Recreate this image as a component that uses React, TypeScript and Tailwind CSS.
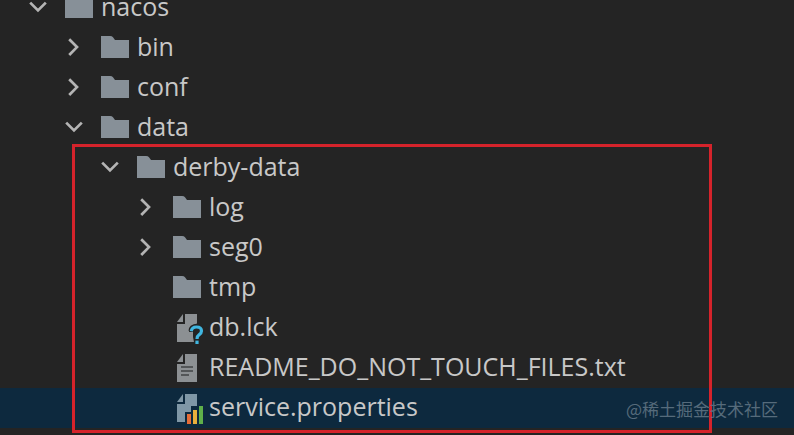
import clsx from "clsx";
import { useState } from "react";

type Kind = "folder" | "unknown" | "text" | "properties";

interface TreeNode {
  name: string;
  kind: Kind;
  children?: TreeNode[];
  closed?: boolean;
  selected?: boolean;
  outlined?: boolean;
}

const tree: TreeNode = {
  name: "nacos",
  kind: "folder",
  children: [
    { name: "bin", kind: "folder", children: [], closed: true },
    { name: "conf", kind: "folder", children: [], closed: true },
    {
      name: "data",
      kind: "folder",
      children: [
        {
          name: "derby-data",
          kind: "folder",
          outlined: true,
          children: [
            { name: "log", kind: "folder", children: [], closed: true },
            { name: "seg0", kind: "folder", children: [], closed: true },
            { name: "tmp", kind: "folder" },
            { name: "db.lck", kind: "unknown" },
            { name: "README_DO_NOT_TOUCH_FILES.txt", kind: "text" },
            { name: "service.properties", kind: "properties", selected: true },
          ],
        },
      ],
    },
  ],
};

const indents = ["pl-[29px]", "pl-[65px]", "pl-[101px]", "pl-[137px]"];

function Chevron({ open }: { open: boolean }) {
  return (
    <svg
      viewBox="0 0 18 40"
      className="h-10 w-[18px]"
      fill="none"
      stroke="#b4b4b4"
      strokeWidth="2.7"
      aria-hidden="true"
    >
      <path d={open ? "M1.2 14.6 L9 22.4 L16.8 14.6" : "M4.2 11.2 L12 19.1 L4.2 27"} />
    </svg>
  );
}

function NodeIcon({ kind, selected }: { kind: Kind; selected?: boolean }) {
  const gray = selected ? "#7f97a6" : "#8c9093";
  return (
    <svg
      viewBox="0 0 32 40"
      className="h-10 w-8 shrink-0"
      aria-hidden="true"
    >
      {kind === "folder" && (
        <path d="M0 8 H9 Q11 8 12 9.3 L14 12 H28 V30 H0 Z" fill="#879098" />
      )}
      {kind === "text" && (
        <>
          <path d="M12 6 H24 V34 H4 V16 H12 Z M10 6 V14 H4 Z" fill={gray} />
          <path
            d="M8 19 H20 M8 23 H20 M8 27 H16"
            stroke="#404345"
            strokeWidth="1.6"
          />
        </>
      )}
      {kind === "unknown" && (
        <>
          <path
            d="M12 6 H24 V15.5 Q17 17 16 24 H20 V29 L21 34 H4 V16 H12 Z M10 6 V14 H4 Z"
            fill={gray}
          />
          <path
            d="M18.5 23 Q18.8 19 23.5 19 Q28.5 19 28.5 23 Q28.5 25.2 26 26.8 Q24 28.2 24 31"
            fill="none"
            stroke="#252525"
            strokeWidth="6"
          />
          <path
            d="M18.3 23.2 Q18.8 19 23.5 19 Q28.5 19 28.5 23 Q28.5 25.2 26 26.8 Q24 28.2 24 31"
            fill="none"
            stroke="#40b6e0"
            strokeWidth="3.2"
          />
          <path d="M22.4 32.6 H25.6 V36 H22.4 Z" fill="#40b6e0" />
        </>
      )}
      {kind === "properties" && (
        <>
          <path
            d="M12 6 H24 V16 H24 V18 H18 V24 H12 V34 H4 V16 H12 Z M10 6 V14 H4 Z"
            fill={gray}
          />
          <path d="M14 26 H18 V36 H14 Z" fill="#e66d37" />
          <path d="M20 22 H24 V36 H20 Z" fill="#e9af3c" />
          <path d="M26 18 H30 V36 H26 Z" fill="#5fb04a" />
        </>
      )}
    </svg>
  );
}

function TreeItem({ node, depth }: { node: TreeNode; depth: number }) {
  const [open, setOpen] = useState(!node.closed);
  return (
    <li className={clsx(node.outlined && "relative")}>
      <button
        type="button"
        onClick={() => setOpen(!open)}
        className={clsx(
          "flex h-10 w-full items-center text-left",
          indents[depth],
          node.selected && "bg-[#0d293e]"
        )}
      >
        <span className="w-9 shrink-0">
          {node.children && <Chevron open={open} />}
        </span>
        <NodeIcon kind={node.kind} selected={node.selected} />
        <span className="ml-1 pb-1 whitespace-nowrap">{node.name}</span>
      </button>
      {open && node.children && node.children.length > 0 && (
        <ul>
          {node.children.map((child) => (
            <TreeItem key={child.name} node={child} depth={depth + 1} />
          ))}
        </ul>
      )}
      {node.outlined && (
        <div className="pointer-events-none absolute -top-1 -bottom-[5px] left-[72px] w-[640px] border-3 border-[#d5232b]" />
      )}
    </li>
  );
}

function App() {
  return (
    <main className="relative min-h-screen overflow-hidden bg-[#242424] font-['Open_Sans','Noto_Sans',sans-serif] text-[25px] leading-9 text-[#c8c8c8]">
      <ul className="-mt-3">
        <TreeItem node={tree} depth={0} />
      </ul>
      <p className="absolute right-4 bottom-3 font-['Noto_Sans_CJK_SC',sans-serif] text-[17px] leading-7 text-[#566b7b]">
        @稀土掘金技术社区
      </p>
    </main>
  );
}

export default App;
